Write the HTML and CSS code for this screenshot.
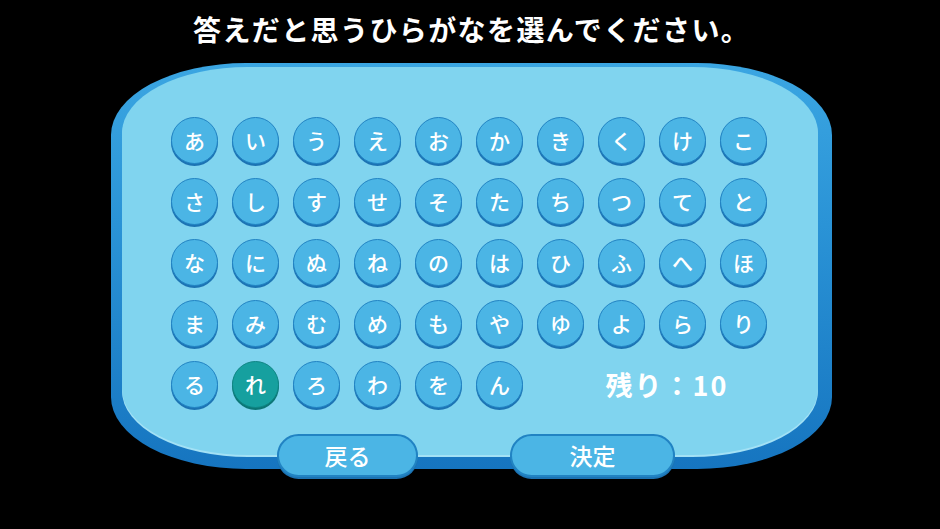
FILE: index.html
```html
<!DOCTYPE html>
<html lang="ja">
<head>
<meta charset="utf-8">
<title>ひらがな選択</title>
<link rel="stylesheet" href="styles.css">
</head>
<body>
<div class="screen">
  <h1 class="title">答えだと思うひらがなを選んでください。</h1>
  <div class="panel">
    <div class="panel-inner">
      <div class="kana-grid">
        <button class="kana">あ</button><button class="kana">い</button><button class="kana">う</button><button class="kana">え</button><button class="kana">お</button><button class="kana">か</button><button class="kana">き</button><button class="kana">く</button><button class="kana">け</button><button class="kana">こ</button>
        <button class="kana">さ</button><button class="kana">し</button><button class="kana">す</button><button class="kana">せ</button><button class="kana">そ</button><button class="kana">た</button><button class="kana">ち</button><button class="kana">つ</button><button class="kana">て</button><button class="kana">と</button>
        <button class="kana">な</button><button class="kana">に</button><button class="kana">ぬ</button><button class="kana">ね</button><button class="kana">の</button><button class="kana">は</button><button class="kana">ひ</button><button class="kana">ふ</button><button class="kana">へ</button><button class="kana">ほ</button>
        <button class="kana">ま</button><button class="kana">み</button><button class="kana">む</button><button class="kana">め</button><button class="kana">も</button><button class="kana">や</button><button class="kana">ゆ</button><button class="kana">よ</button><button class="kana">ら</button><button class="kana">り</button>
        <button class="kana">る</button><button class="kana kana-selected">れ</button><button class="kana">ろ</button><button class="kana">わ</button><button class="kana">を</button><button class="kana">ん</button>
        <div class="remaining">残り：10</div>
      </div>
    </div>
  </div>
  <div class="actions">
    <button class="action action-back">戻る</button>
    <button class="action action-ok">決定</button>
  </div>
</div>
</body>
</html>
```

FILE: styles.css
```css
* {
  box-sizing: border-box;
}

html, body {
  margin: 0;
  padding: 0;
  background: #000;
}

body {
  font-family: "Noto Sans CJK JP", "Noto Sans", sans-serif;
}

.screen {
  width: 940px;
  height: 529px;
  background: #000;
  display: flex;
  flex-direction: column;
  overflow: hidden;
}

.title {
  margin: 14px 0 0 193px;
  font-size: 28px;
  line-height: 30px;
  font-weight: 700;
  letter-spacing: 1.4px;
  color: #fff;
  white-space: nowrap;
}

.panel {
  margin: 19px 0 0 111px;
  width: 721px;
  height: 406px;
  padding: 4px 14px 14px 11px;
  border-radius: 135px / 72px;
  background: linear-gradient(to bottom, #3ba6e2 0%, #2a93d6 40%, #1675c0 100%);
}

.panel-inner {
  width: 100%;
  height: 100%;
  border-radius: 126px / 66px;
  background: #80d4ef;
  box-shadow: 0 2px 0 #a3e1f5;
  padding: 50px 0 0 49px;
}

.kana-grid {
  display: grid;
  grid-template-columns: repeat(10, 47px);
  grid-auto-rows: 47px;
  gap: 14px;
}

.kana {
  width: 47px;
  height: 47px;
  padding: 0;
  margin: 0;
  border-radius: 50%;
  border: 1.5px solid #2183c3;
  background: #4bb5e5;
  box-shadow: 0 2px 0 #1c73b3;
  color: #fff;
  font-family: "Noto Sans CJK JP", "Noto Sans", sans-serif;
  font-size: 21px;
  font-weight: 500;
  line-height: 1;
  display: flex;
  align-items: center;
  justify-content: center;
}

.kana-selected {
  background: #16a09f;
  border-color: #0f8584;
  box-shadow: 0 2px 0 #0b7675;
}

.remaining {
  grid-column: 7 / span 4;
  display: flex;
  align-items: center;
  justify-content: center;
  padding-left: 30px;
  color: #fff;
  font-size: 27px;
  font-weight: 700;
  letter-spacing: 2px;
  white-space: nowrap;
}

.actions {
  display: flex;
  gap: 92px;
  margin: -35px 0 0 277px;
}

.action {
  height: 43px;
  padding: 0;
  margin: 0;
  border-radius: 22px;
  border: 2px solid #2183c3;
  background: #4bb5e5;
  box-shadow: 0 2px 0 #1c73b3;
  color: #fff;
  font-family: "Noto Sans CJK JP", "Noto Sans", sans-serif;
  font-size: 23px;
  font-weight: 500;
  line-height: 1;
  display: flex;
  align-items: center;
  justify-content: center;
}

.action-back {
  width: 141px;
}

.action-ok {
  width: 165px;
}
```
